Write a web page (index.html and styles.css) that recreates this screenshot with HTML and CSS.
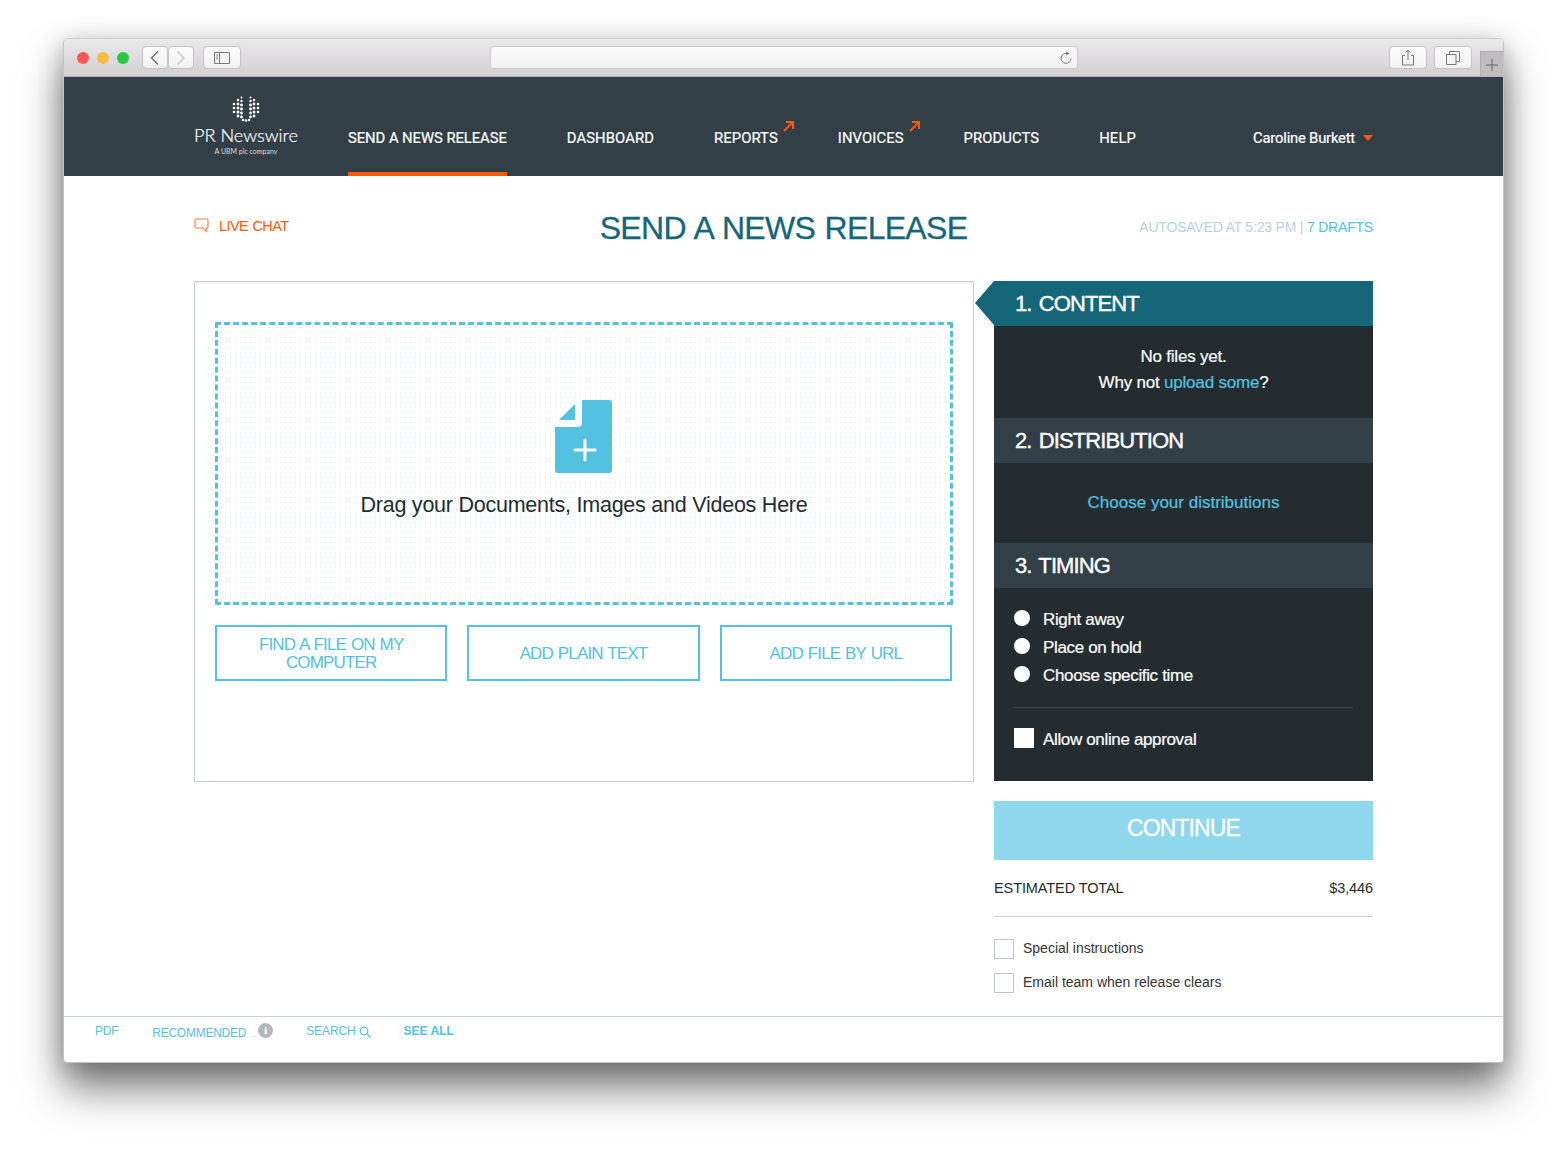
FILE: index.html
```html
<!doctype html>
<html lang="en">
<head>
<meta charset="utf-8">
<title>Send a news release</title>
<link rel="stylesheet" href="styles.css">
</head>
<body>

<div class="window">

	<div class="toolbar">
		<div class="lights"><i class="red"></i><i class="yellow"></i><i class="green"></i></div>
		<div class="tbtn back"><svg width="10" height="16" viewBox="0 0 10 16"><path d="M8 1.5 1.500 8 8 14.500" fill="none" stroke="#6d6d6d" stroke-width="1.3"/></svg></div>
		<div class="tbtn fwd"><svg width="10" height="16" viewBox="0 0 10 16"><path d="M1.5 1.5 8 8l-6.5 6.5" fill="none" stroke="#c4c4c4" stroke-width="1.3"/></svg></div>
		<div class="tbtn side"><svg width="16" height="12" viewBox="0 0 16 12"><path d="M.5.5h15v11H.5zM5.5.5v11" fill="none" stroke="#777"/><path d="M2 3h2M2 5h2M2 7h2" stroke="#888"/></svg></div>
		<div class="urlbar"><svg width="14" height="14" viewBox="0 0 14 14"><path d="M8.7 2.6A5 5 0 1 0 12 7.4" fill="none" stroke="#777" stroke-width="1"/><path d="M7.2.6l3.4 2-3.4 2z" fill="#777"/></svg></div>
		<div class="tbtn share"><svg width="14" height="17" viewBox="0 0 14 17"><path d="M4 6.500H1.500v9.500h11V6.500H10M7 11V1M4.500 3.500 7 1l2.500 2.500" fill="none" stroke="#777"/></svg></div>
		<div class="tbtn tabs"><svg width="14" height="14" viewBox="0 0 14 14"><path d="M.5 3.500h9.500v10H.5zM3.500 3.500V.5h10v10H10" fill="none" stroke="#777"/></svg></div>
		<div class="newtab"><svg width="12" height="12" viewBox="0 0 12 12"><path d="M6 0v12M0 6h12" stroke="#666"/></svg></div>
	</div>

	<div class="topnav">
		<div class="logo">
			<svg width="28" height="26" viewBox="0 0 28 26" fill="#fff">
				<g id="dots">
					<circle cx="2" cy="8" r="1.300"/><circle cx="2" cy="12" r="1.300"/><circle cx="2" cy="16" r="1.300"/>
					<circle cx="6" cy="4" r="1.300"/><circle cx="6" cy="8" r="1.400"/><circle cx="6" cy="12" r="1.500"/><circle cx="6" cy="16" r="1.500"/><circle cx="6" cy="20" r="1.400"/>
					<circle cx="9.500" cy="1.500" r="1"/><circle cx="9.500" cy="5" r="1.200"/><circle cx="9.500" cy="9" r="1.400"/><circle cx="9.500" cy="13" r="1.400"/><circle cx="9.500" cy="17" r="1.400"/><circle cx="9.500" cy="21" r="1.400"/><circle cx="11" cy="24" r="1.300"/>
				</g>
				<use href="#dots" transform="matrix(-1 0 0 1 28 0)"/>
				<circle cx="14" cy="24.500" r="1.300"/>
			</svg>
			<div class="logo-name">PR Newswire</div>
			<div class="logo-sub">A UBM plc company</div>
		</div>
		<a class="nav-item active">SEND A NEWS RELEASE</a>
		<a class="nav-item">DASHBOARD</a>
		<a class="nav-item ext">REPORTS<svg class="ext-arrow" width="11" height="11" viewBox="0 0 11 11"><path d="M1 10 10 1M3 1h7v7" fill="none" stroke="#fa5a0f" stroke-width="2"/></svg></a>
		<a class="nav-item ext">INVOICES<svg class="ext-arrow" width="11" height="11" viewBox="0 0 11 11"><path d="M1 10 10 1M3 1h7v7" fill="none" stroke="#fa5a0f" stroke-width="2"/></svg></a>
		<a class="nav-item">PRODUCTS</a>
		<a class="nav-item">HELP</a>
		<a class="nav-user">Caroline Burkett<span class="caret"></span></a>
	</div>

	<div class="page">

		<div class="page-head">
			<a class="chat"><svg width="15" height="15" viewBox="0 0 15 15"><path d="M2.500 1h10A1.500 1.500 0 0 1 14 2.500v6a1.500 1.500 0 0 1-1.500 1.500H12.500l-.3 3.500-3-3.500H2.500A1.500 1.500 0 0 1 1 8.500v-6A1.500 1.500 0 0 1 2.500 1z" fill="none" stroke="#f47a3c" stroke-width="1.100"/></svg>LIVE CHAT</a>
			<h1>SEND A NEWS RELEASE</h1>
			<div class="autosave">AUTOSAVED AT 5:23 PM | <a>7 DRAFTS</a></div>
		</div>

		<div class="columns">

			<div class="upload">
				<div class="dropzone">
					<svg class="doc" width="57" height="73" viewBox="0 0 57 73">
						<path d="M27 0h27a3 3 0 0 1 3 3v67a3 3 0 0 1-3 3H3a3 3 0 0 1-3-3V27h23a4 4 0 0 0 4-4z" fill="#53c1e0"/>
						<path d="M4 20 20 4v16z" fill="#53c1e0"/>
						<path d="M30 40v20M20 50h20" stroke="#fff" stroke-width="3" stroke-linecap="round"/>
					</svg>
					<p>Drag your Documents, Images and Videos Here</p>
				</div>
				<div class="actions">
					<a class="btn">FIND A FILE ON MY COMPUTER</a>
					<a class="btn">ADD PLAIN TEXT</a>
					<a class="btn">ADD FILE BY URL</a>
				</div>
			</div>

			<div class="sidebar">
				<div class="steps">
					<h2 class="step current">1. CONTENT</h2>
					<div class="step-body files">No files yet.<br>Why not <a>upload some</a>?</div>
					<h2 class="step">2. DISTRIBUTION</h2>
					<div class="step-body dist"><a>Choose your distributions</a></div>
					<h2 class="step">3. TIMING</h2>
					<div class="step-body timing">
						<div class="opt"><i class="radio"></i>Right away</div>
						<div class="opt"><i class="radio"></i>Place on hold</div>
						<div class="opt"><i class="radio"></i>Choose specific time</div>
						<div class="opt approval"><i class="check"></i>Allow online approval</div>
					</div>
				</div>
				<a class="continue">CONTINUE</a>
				<div class="total"><span>ESTIMATED TOTAL</span><span>$3,446</span></div>
				<div class="extra"><i class="box"></i>Special instructions</div>
				<div class="extra"><i class="box"></i>Email team when release clears</div>
			</div>

		</div>
	</div>

	<div class="footer">
		<a class="pdf">PDF</a>
		<a class="rec">RECOMMENDED</a>
		<span class="info">i</span>
		<a class="search">SEARCH<svg width="12" height="12" viewBox="0 0 12 12"><circle cx="5" cy="5" r="3.800" fill="none" stroke="#53c1e0" stroke-width="1.200"/><path d="m8 8 3.500 3.500" stroke="#53c1e0" stroke-width="1.400"/></svg></a>
		<a class="all">SEE ALL</a>
	</div>

</div>

</body>
</html>
```

FILE: styles.css
```css
html { --blue: #53c1e0; --orange: #fa5a0f; --slate: #333f47; --dark: #252c2f; }

body { background-color: #fff; box-sizing: border-box; font: 14px "Liberation Sans", Arial, sans-serif; height: 1152px; margin: 0; overflow: hidden; padding: 38px 0 0 63px; }

a { color: inherit; text-decoration: none; }
h1, h2, p { font-weight: normal; margin: 0; }
i { display: block; }

.window { background-color: #fff; border: 1px solid #c4c4c4; border-top-color: #cfcfcf; border-radius: 5px 5px 4px 4px; box-shadow: 0 26px 40px rgba( 0, 0, 0, .5 ), 0 4px 24px rgba( 0, 0, 0, .22 );
	box-sizing: border-box; display: flex; flex-direction: column; height: 1025px; overflow: hidden; width: 1441px; }

/* browser chrome */
.toolbar { align-items: center; background: linear-gradient( #ebe9eb, #d2d0d2 ); border-bottom: 1px solid #b5b3b5; box-sizing: border-box; display: flex; flex: none; height: 38px; padding: 0 0 0 13px; }
.toolbar > * { flex: none; }
.lights { display: flex; gap: 8px; margin-right: 13px; }
.lights i { border-radius: 50%; height: 12px; width: 12px; }
.red { background-color: #fc5753; }
.yellow { background-color: #fdbc40; }
.green { background-color: #2ac840; }

.tbtn { align-items: center; background: linear-gradient( #fdfdfd, #f1f1f1 ); border: 1px solid #c6c4c6; border-radius: 4px; box-sizing: border-box; display: flex; height: 23px; justify-content: center; }
.back { width: 26px; }
.fwd { margin-right: 9px; width: 26px; }
.side { margin-right: 249px; width: 38px; }
.share { margin-right: 7px; width: 38px; }
.tabs { margin-right: 8px; width: 38px; }

.urlbar { align-items: center; background: linear-gradient( #fbfbfb, #f1f1f1 ); border: 1px solid #cdcbcd; border-radius: 4px; box-sizing: border-box; display: flex; height: 23px; justify-content: flex-end; margin-right: 311px; padding-right: 4px; width: 588px; }

.newtab { align-items: center; align-self: flex-end; background-color: #bfbdbf; border: 1px solid #aeacae; border-width: 1px 0 0 1px; box-sizing: border-box; display: flex; height: 25px; justify-content: center; padding-top: 2px; width: 23px; }

/* site nav */
.topnav { align-items: stretch; background-color: var( --slate ); box-sizing: border-box; color: #fff; display: flex; flex: none; gap: 60px; height: 99px; padding: 0 130px; }

.logo { align-items: center; display: flex; flex: none; flex-direction: column; margin-right: -10px; padding-top: 19px; width: 104px; }
.logo-name { font: 300 18.200px/20px Lato, sans-serif; letter-spacing: -.05px; margin-top: 3px; -webkit-text-stroke: .2px #fff; white-space: nowrap; }
.logo-sub { color: #d7dcdd; font: 7px/9px Lato, sans-serif; margin-top: 2px; white-space: nowrap; }

.nav-item { border-bottom: 4px solid transparent; font: 14.800px/18px Roboto, sans-serif; letter-spacing: .1px; padding-top: 52px; position: relative; -webkit-text-stroke: .2px #fff; white-space: nowrap; }
.nav-item.active { border-bottom-color: var( --orange ); letter-spacing: -.05px; }
.ext-arrow { left: calc( 100% + 5px ); position: absolute; top: 44px; }

.nav-user { font: 14.800px/18px Roboto, sans-serif; letter-spacing: -.2px; margin-left: auto; padding-top: 52px; -webkit-text-stroke: .2px #fff; white-space: nowrap; }
.caret { border-left: 5.500px solid transparent; border-right: 5.500px solid transparent; border-top: 6px solid var( --orange ); display: inline-block; margin-left: 8px; vertical-align: 2px; }

/* page */
.page { flex: 1; padding: 0 130px; }

.page-head { align-items: center; display: grid; grid-template-columns: 1fr 400px 1fr; height: 105px; }
.page-head h1 { color: #156678; font-size: 32px; letter-spacing: -.7px; line-height: 36px; margin-top: -1px; text-align: center; -webkit-text-stroke: .3px #156678; white-space: nowrap; word-spacing: 1.300px; }

.chat { align-items: center; color: var( --orange ); display: flex; font-size: 14.500px; gap: 10px; letter-spacing: -.6px; margin-top: -6px; word-spacing: 1px; }
.autosave { color: #b7d3db; font-size: 14px; letter-spacing: -.2px; margin-top: -3px; text-align: right; white-space: nowrap; }
.autosave a { color: var( --blue ); }

.columns { align-items: flex-start; display: flex; gap: 20px; }

.upload { border: 1px solid #c5cfcf; box-shadow: inset 0 2px 3px rgba( 0, 0, 0, .05 ); box-sizing: border-box; display: flex; flex: none; flex-direction: column; gap: 20px; height: 501px; padding: 40px 20px 0; width: 780px; }

.dropzone { align-items: center; background-image: radial-gradient( circle, #d3eef6 .5px, transparent 1px ); background-size: 5px 5px; border: 3px dashed var( --blue ); box-sizing: border-box; display: flex; flex-direction: column; height: 283px; padding-top: 75px; }
.doc { margin-right: 2px; }
.dropzone p { color: #252c2f; font-size: 21.500px; letter-spacing: -.24px; line-height: 26px; margin-top: 19px; }

.actions { display: flex; gap: 20px; padding-right: 1px; }
.btn { align-items: center; border: 2px solid var( --blue ); box-sizing: border-box; color: var( --blue ); display: flex; flex: 1; font-size: 17px; height: 56px; justify-content: center; letter-spacing: -.85px; line-height: 18px; padding: 2px 30px 0; text-align: center; word-spacing: 1px; }

.sidebar { color: #252c2f; flex: none; width: 379px; }

.steps { background-color: var( --dark ); color: #fff; }
.step { background-color: var( --slate ); font-size: 22px; font-weight: normal; height: 45px; letter-spacing: -.9px; line-height: 45px; padding-left: 21px; -webkit-text-stroke: .4px #fff; word-spacing: 2px; }
.step.current { background-color: #156678; position: relative; }
.step.current::before { border-bottom: 22.500px solid transparent; border-right: 19px solid #156678; border-top: 22.500px solid transparent; content: ""; left: -19px; position: absolute; top: 0; }

.step-body { font-size: 17px; letter-spacing: -.2px; -webkit-text-stroke: .2px; }
.step-body a { color: var( --blue ); }
.files { box-sizing: border-box; height: 92px; line-height: 26px; padding-top: 18px; text-align: center; }
.dist { box-sizing: border-box; height: 80px; letter-spacing: 0; line-height: 80px; text-align: center; }

.timing { box-sizing: border-box; height: 193px; letter-spacing: -.35px; padding: 18px 20px 0; }
.opt { align-items: center; display: flex; gap: 13px; height: 28px; line-height: 28px; }
.radio { background-color: #fff; border-radius: 50%; height: 16px; margin-top: -4px; width: 16px; }
.approval { border-top: 1px solid #3a4347; gap: 9px; height: 63px; margin-top: 17px; }
.check { background-color: #fff; height: 20px; margin-top: -3px; width: 20px; }

.continue { background-color: #8ed7ec; color: #fff; display: block; font-size: 23px; height: 59px; letter-spacing: -.9px; line-height: 55px; margin-top: 20px; text-align: center; -webkit-text-stroke: .3px #fff; }

.total { border-bottom: 1px solid #c5cfcf; display: flex; font-size: 14.500px; height: 56px; justify-content: space-between; letter-spacing: -.1px; line-height: 56px; margin-bottom: 14px; }

.extra { align-items: center; color: #333; display: flex; font-size: 14px; gap: 9px; height: 34px; }
.box { border: 1px solid #c0c6c8; box-sizing: border-box; height: 20px; margin-top: 2px; width: 20px; }

/* footer */
.footer { align-items: flex-start; border-top: 1px solid #c5d2d4; box-sizing: border-box; color: var( --blue ); display: flex; flex: none; font-size: 12px; height: 46px; padding: 7px 0 0 31px; }
.footer a { line-height: 15px; }
.pdf { letter-spacing: -.25px; margin-right: 34px; }
.rec { letter-spacing: -.25px; margin: 2px 12px 0 0; }
.info { background-color: #b3b8b9; border-radius: 50%; color: #fff; font: bold 10px/15px "DejaVu Serif", serif; height: 15px; margin: -1px 33px 0 0; text-align: center; width: 15px; }
.search { align-items: center; display: flex; gap: 3px; letter-spacing: -.1px; margin-right: 33px; }
.all { font-weight: bold; }
```
